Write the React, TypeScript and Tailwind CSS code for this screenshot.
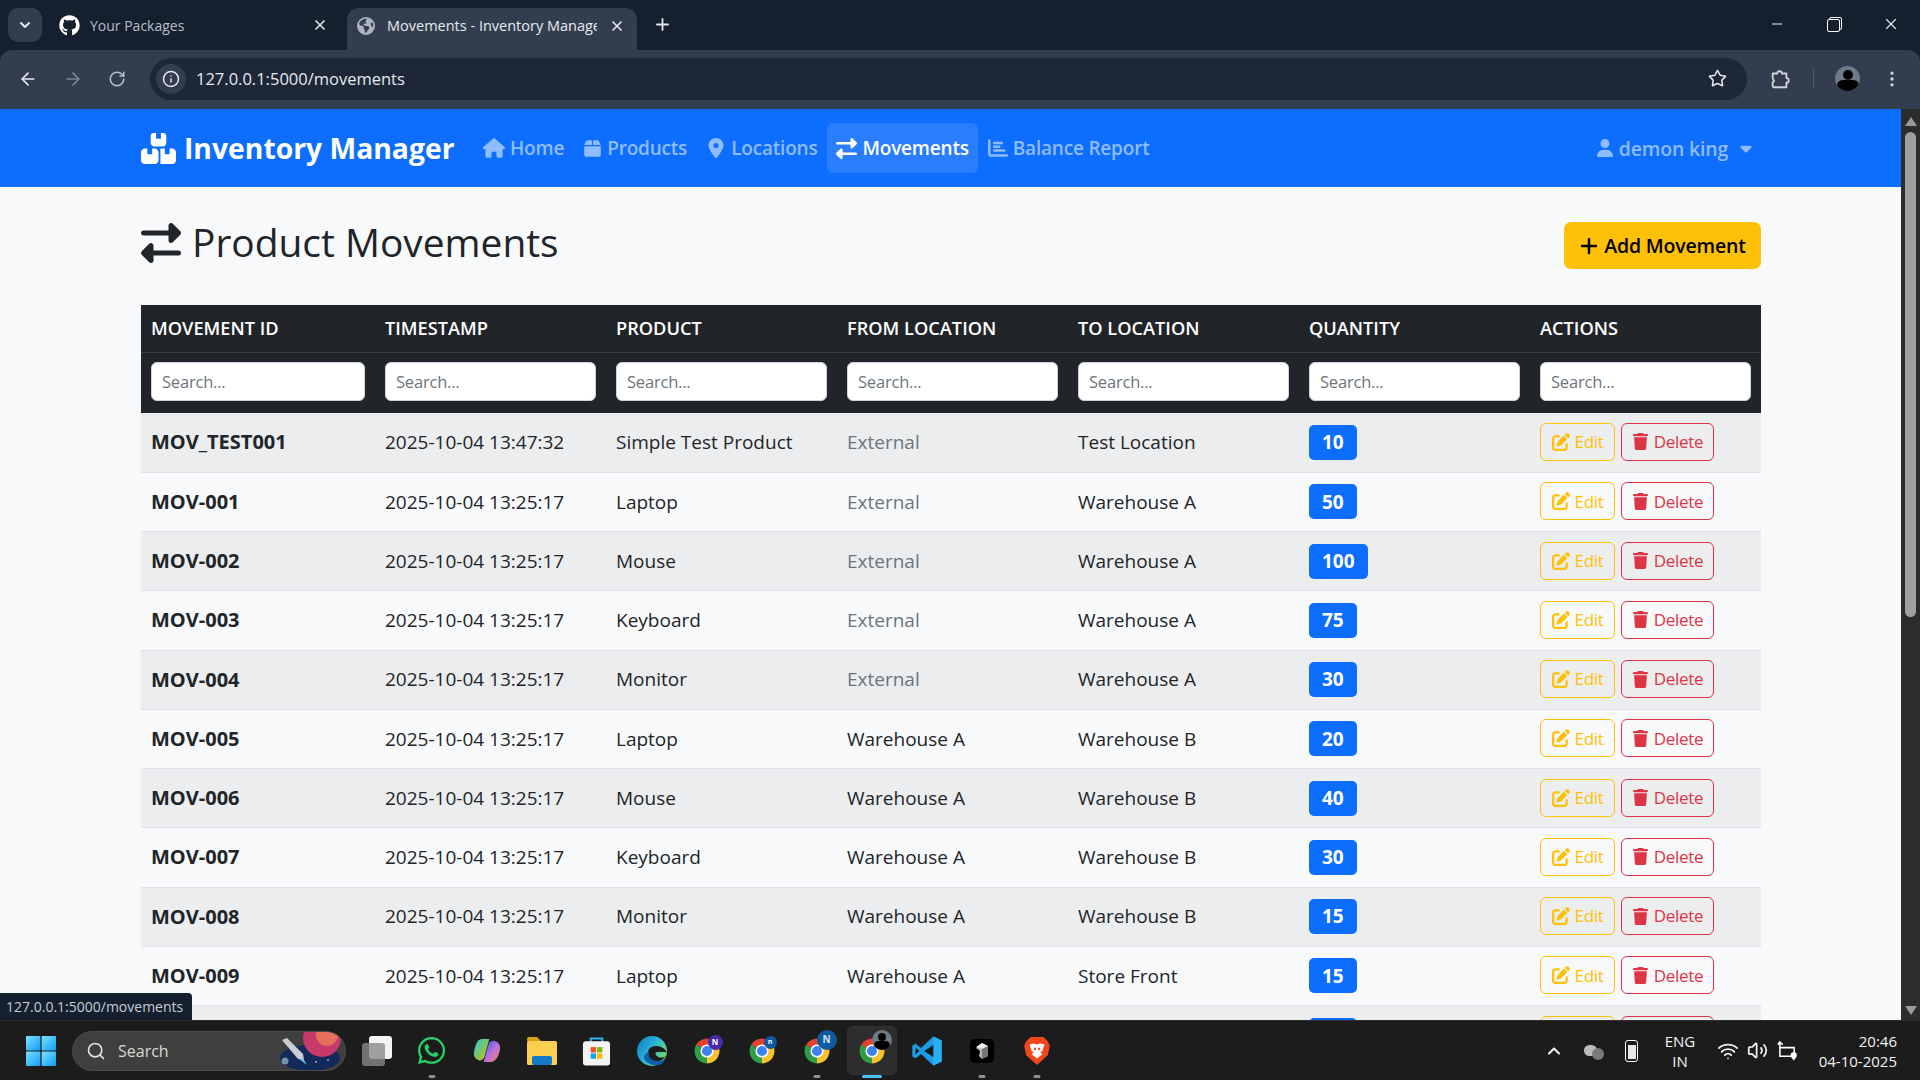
import { ArrowLeft, ArrowRight, ChevronDown, ChevronUp, EllipsisVertical, Info, Minus, Plus, RotateCw, Search, Star, Volume2, Wifi, X } from "lucide-react";
import { FaBox, FaBoxesStacked, FaCaretDown, FaChartBar, FaEarthAmericas, FaGithub, FaHouse, FaLocationDot, FaPenToSquare, FaPlus, FaRightLeft, FaTrash, FaUser, FaWhatsapp } from "react-icons/fa6";

const movements = [
    ["MOV_TEST001", "2025-10-04 13:47:32", "Simple Test Product", "External", "Test Location", "10"],
    ["MOV-001", "2025-10-04 13:25:17", "Laptop", "External", "Warehouse A", "50"],
    ["MOV-002", "2025-10-04 13:25:17", "Mouse", "External", "Warehouse A", "100"],
    ["MOV-003", "2025-10-04 13:25:17", "Keyboard", "External", "Warehouse A", "75"],
    ["MOV-004", "2025-10-04 13:25:17", "Monitor", "External", "Warehouse A", "30"],
    ["MOV-005", "2025-10-04 13:25:17", "Laptop", "Warehouse A", "Warehouse B", "20"],
    ["MOV-006", "2025-10-04 13:25:17", "Mouse", "Warehouse A", "Warehouse B", "40"],
    ["MOV-007", "2025-10-04 13:25:17", "Keyboard", "Warehouse A", "Warehouse B", "30"],
    ["MOV-008", "2025-10-04 13:25:17", "Monitor", "Warehouse A", "Warehouse B", "15"],
    ["MOV-009", "2025-10-04 13:25:17", "Laptop", "Warehouse A", "Store Front", "15"],
    ["MOV-010", "2025-10-04 13:25:17", "Mouse", "Warehouse A", "Store Front", "25"],
];

const headers = ["MOVEMENT ID", "TIMESTAMP", "PRODUCT", "FROM LOCATION", "TO LOCATION", "QUANTITY", "ACTIONS"];

function ChromeIcon({ badge }: { badge?: React.ReactNode }) {
    return (
        <div className="relative w-[30px] h-[30px]">
            <svg viewBox="0 0 48 48" className="w-[30px] h-[30px]">
                <path d="M24 24L6.68 14A20 20 0 0 1 41.32 14Z" fill="#e2412f" />
                <path d="M24 24L41.32 14A20 20 0 0 1 24 44Z" fill="#fbc02d" />
                <path d="M24 24L24 44A20 20 0 0 1 6.68 14Z" fill="#2e9e48" />
                <circle cx="24" cy="24" r="10.5" fill="#fff" />
                <circle cx="24" cy="24" r="8" fill="#3b82f0" />
            </svg>
            {badge}
        </div>
    );
}

function Dot({ active }: { active?: boolean }) {
    if (active) return <div className="absolute bottom-[3px] left-1/2 -translate-x-1/2 w-[20px] h-[3px] rounded-full bg-[#4cc2ff]" />;
    return <div className="absolute bottom-[3px] left-1/2 -translate-x-1/2 w-[7px] h-[3px] rounded-full bg-[#8f8f8f]" />;
}

function TaskIcon({ children, dot, active }: { children: React.ReactNode; dot?: boolean; active?: boolean }) {
    return (
        <div className="relative w-[55px] h-[60px] flex items-center justify-center">
            {active && <div className="absolute top-[5px] left-[3px] w-[50px] h-[49px] rounded-md bg-[#2d2d2d] border border-[#333]" />}
            <div className="relative">{children}</div>
            {dot && <Dot active={active} />}
        </div>
    );
}

function Taskbar() {
    return (
        <div className="h-[60px] shrink-0 flex items-center bg-[#1c1c1c] border-t border-[#2f2f2f] pl-[14px] pr-[23px] text-white">
            <div className="w-[54px] flex justify-center">
                <svg viewBox="0 0 30 30" className="w-[30px] h-[30px]">
                    <defs>
                        <linearGradient id="win" x1="0" y1="0" x2="1" y2="1">
                            <stop offset="0" stopColor="#7be3ff" />
                            <stop offset="1" stopColor="#0f9bfa" />
                        </linearGradient>
                    </defs>
                    <rect x="0" y="0" width="14.4" height="14.4" rx="1" fill="url(#win)" />
                    <rect x="15.6" y="0" width="14.4" height="14.4" rx="1" fill="url(#win)" />
                    <rect x="0" y="15.6" width="14.4" height="14.4" rx="1" fill="url(#win)" />
                    <rect x="15.6" y="15.6" width="14.4" height="14.4" rx="1" fill="url(#win)" />
                </svg>
            </div>
            <div className="relative ml-[4px] mr-[3px] w-[274px] h-[40px] rounded-full bg-[#3f3f3f] border border-[#4c4c4c] flex items-center pl-[13px] overflow-hidden">
                <Search size={20} strokeWidth={2} className="text-[#e0e0e0]" />
                <span className="ml-[12px] text-[16px] text-[#d8d8d8]">Search</span>
                <svg viewBox="0 0 62 38" className="absolute right-[3px] top-0 w-[62px] h-[38px]">
                    <ellipse cx="30" cy="26" rx="30" ry="13" fill="#12295a" />
                    <circle cx="42" cy="6" r="19" fill="#c7386b" />
                    <circle cx="47" cy="3" r="11" fill="#e5705a" />
                    <path d="M2 8L7 6L23 22L24 28L18 27Z" fill="#c9ced6" />
                    <path d="M19 27L27 33L24 28Z" fill="#5fc7f5" />
                    <circle cx="5" cy="29" r="3.5" fill="#7891ad" />
                    <circle cx="36" cy="30" r="0.8" fill="#fff" />
                    <circle cx="48" cy="28" r="0.8" fill="#fff" />
                </svg>
            </div>
            <TaskIcon>
                <div className="relative w-[30px] h-[30px]">
                    <div className="absolute right-0 top-0 w-[23px] h-[23px] rounded-[3px] bg-[#f3f3f3]" />
                    <div className="absolute left-0 bottom-0 w-[23px] h-[23px] rounded-[3px] bg-[#8a8a8a]/80" />
                </div>
            </TaskIcon>
            <TaskIcon dot>
                <FaWhatsapp size={31} className="text-[#25d366]" />
            </TaskIcon>
            <TaskIcon>
                <svg viewBox="0 0 30 30" className="w-[29px] h-[29px]">
                    <defs>
                        <linearGradient id="cop1" x1="0" y1="0" x2="1" y2="1">
                            <stop offset="0" stopColor="#2fc7e8" />
                            <stop offset="0.6" stopColor="#8ac44c" />
                            <stop offset="1" stopColor="#f4c22f" />
                        </linearGradient>
                        <linearGradient id="cop2" x1="0" y1="0" x2="1" y2="1">
                            <stop offset="0" stopColor="#2b62e0" />
                            <stop offset="0.5" stopColor="#b66ee0" />
                            <stop offset="1" stopColor="#f68a5a" />
                        </linearGradient>
                    </defs>
                    <path d="M10 3h8l-5 18c-1 3-3 5-6 4-3-1-5-3-5-6 0-6 3-16 8-16Z" fill="url(#cop1)" />
                    <path d="M20 27h-8l5-18c1-3 3-4 6-4 3 1 6 3 6 7 0 6-4 15-9 15Z" fill="url(#cop2)" />
                </svg>
            </TaskIcon>
            <TaskIcon>
                <svg viewBox="0 0 30 28" className="w-[30px] h-[28px]">
                    <path d="M0 2a2 2 0 0 1 2-2h8l4 4H0Z" fill="#d9a014" />
                    <rect x="0" y="4" width="30" height="24" rx="1.5" fill="#fcd04f" />
                    <rect x="5" y="19" width="20" height="9" rx="2" fill="#1478c8" />
                </svg>
            </TaskIcon>
            <TaskIcon>
                <svg viewBox="0 0 30 30" className="w-[29px] h-[30px]">
                    <path d="M9 6V2h12v4" fill="none" stroke="#29b6f6" strokeWidth="2" />
                    <rect x="1" y="5" width="28" height="25" rx="3" fill="#f3f3f3" />
                    <rect x="9" y="11" width="5.5" height="5.5" fill="#f25022" />
                    <rect x="15.5" y="11" width="5.5" height="5.5" fill="#7fba00" />
                    <rect x="9" y="17.5" width="5.5" height="5.5" fill="#00a4ef" />
                    <rect x="15.5" y="17.5" width="5.5" height="5.5" fill="#ffb900" />
                </svg>
            </TaskIcon>
            <TaskIcon>
                <svg viewBox="0 0 30 30" className="w-[30px] h-[30px]">
                    <defs>
                        <linearGradient id="edge" x1="0" y1="0" x2="1" y2="0.6">
                            <stop offset="0" stopColor="#0d79c9" />
                            <stop offset="0.55" stopColor="#2bb5d8" />
                            <stop offset="1" stopColor="#6fdc6a" />
                        </linearGradient>
                    </defs>
                    <circle cx="15" cy="15" r="15" fill="url(#edge)" />
                    <path d="M30 17c-2-5-6-7-11-7-5 0-8 3-8 7 0 5 5 9 10 8 3 0 6-2 8-5-3 2-7 2-9 0-2-1-2-4 0-4h8c1 0 2 1 2 1Z" fill="#1c1c1c" />
                    <path d="M7 22c2 5 8 8 14 7 3 0 6-3 7-6-3 2-8 3-12 1-3-1-5-4-4-8-3 0-5 3-5 6Z" fill="#0f5ea8" />
                </svg>
            </TaskIcon>
            <TaskIcon>
                <ChromeIcon badge={<div className="absolute -top-[1px] -right-[1px] w-[15px] h-[15px] rounded-full bg-[#4b2aa8] flex items-center justify-center text-[8px] font-bold text-white">N</div>} />
            </TaskIcon>
            <TaskIcon>
                <ChromeIcon badge={<div className="absolute top-0 right-0 w-[13px] h-[13px] rounded-full bg-[#0f5a9e] flex items-center justify-center text-[7px] font-bold text-white">n</div>} />
            </TaskIcon>
            <TaskIcon dot>
                <ChromeIcon badge={<div className="absolute -top-[6px] -right-[5px] w-[20px] h-[20px] rounded-full bg-[#0f5a9e] flex items-center justify-center text-[10px] font-bold text-[#cfe2f5]">N</div>} />
            </TaskIcon>
            <TaskIcon dot active>
                <ChromeIcon
                    badge={
                        <div className="absolute -top-[6px] -right-[5px] w-[20px] h-[20px] rounded-full bg-[#6f7a88] overflow-hidden flex flex-col items-center">
                            <div className="mt-[3px] w-[8px] h-[9px] rounded-full bg-black" />
                            <div className="w-[16px] h-[10px] rounded-full bg-black" />
                        </div>
                    }
                />
            </TaskIcon>
            <TaskIcon>
                <svg viewBox="0 0 100 100" className="w-[30px] h-[30px]">
                    <path d="M71 2L99 15V85L71 98L30 60L12 74L1 68V32L12 26L30 40Z" fill="#1a9be6" />
                    <path d="M71 2L99 15V85L71 98Z" fill="#29b0f2" />
                    <path d="M71 30L41 50L71 70Z" fill="#1c1c1c" />
                    <path d="M12 38L24 50L12 62Z" fill="#1c1c1c" />
                </svg>
            </TaskIcon>
            <TaskIcon dot>
                <svg viewBox="0 0 24 24" className="w-[24px] h-[24px]">
                    <rect width="24" height="24" rx="5" fill="#000" />
                    <path d="M12 4L18 7L17 11L18 17L12 20L9 17L10 12L6 9Z" fill="#b5b5b5" />
                    <path d="M12 4L18 7L12 10L6 8Z" fill="#eee" />
                    <path d="M12 10L18 7L18 17L12 20Z" fill="#777" />
                </svg>
            </TaskIcon>
            <TaskIcon dot>
                <svg viewBox="0 0 24 28" className="w-[26px] h-[30px]">
                    <path d="M6 1H18L22 5L24 9L22 18L12 27L2 18L0 9L2 5Z" fill="#f1471d" />
                    <path d="M5 8L9 7L12 8L15 7L19 8L17 14L15 15L17 17L12 21L7 17L9 15L7 14Z" fill="#fff" />
                    <path d="M9 11H11V13H9ZM13 11H15V13H13Z" fill="#f1471d" />
                </svg>
            </TaskIcon>

            <div className="ml-auto flex items-center text-[#f2f2f2]">
                <ChevronUp size={20} strokeWidth={2.5} />
                <div className="relative ml-[20px] w-[20px] h-[18px]">
                    <div className="absolute left-0 top-[3px] w-[13px] h-[11px] rounded-full bg-[#bdbdbd]" />
                    <div className="absolute right-0 bottom-0 w-[12px] h-[12px] rounded-full bg-[#7a7a7a]" />
                </div>
                <div className="ml-[21px] w-[13px] h-[22px] rounded-[3px] border-[1.5px] border-white p-[1.5px] flex items-end">
                    <div className="w-full h-[14px] bg-white/90" />
                </div>
                <div className="ml-[24px] w-[36px] text-center text-[15px] leading-[20px]">
                    <div>ENG</div>
                    <div>IN</div>
                </div>
                <Wifi size={22} className="ml-[19px]" />
                <Volume2 size={21} className="ml-[8px]" />
                <svg viewBox="0 0 22 22" className="ml-[9px] w-[21px] h-[21px]" fill="none" stroke="white" strokeWidth="1.6">
                    <path d="M3 8h15v9H3Z" />
                    <path d="M3 3v5M6 5L3 2 1 5" />
                    <path d="M15 16c0-3 5-3 5 0 0 2-2 3-2.500 4-.5-1-2.500-2-2.500-4Z" fill="white" />
                </svg>
                <div className="ml-[17px] text-right text-[15px] leading-[20px] w-[82px] whitespace-nowrap">
                    <div>20:46</div>
                    <div>04-10-2025</div>
                </div>
            </div>
        </div>
    );
}

function BrowserChrome() {
    return (
        <div className="shrink-0 bg-[#15202e] text-[#e6e9ed]">
            <div className="h-[50px] flex items-start pl-[8px]">
                <div className="mt-[8px] w-[34px] h-[34px] rounded-[10px] bg-[#323e4f] flex items-center justify-center">
                    <ChevronDown size={16} strokeWidth={3} />
                </div>
                <div className="w-[299px] h-[42px] flex items-center pl-[17px] pr-[13px] mt-[4px] text-[#b6bdc7]">
                    <FaGithub size={21} className="text-white" />
                    <span className="ml-[10px] text-[14px]">Your Packages</span>
                    <X size={16} strokeWidth={2.5} className="ml-auto text-[#e6e9ed]" />
                </div>
                <div className="ml-[6px] mt-[8px] w-[290px] h-[42px] rounded-t-[12px] bg-[#323e4f] flex items-center pl-[10px] pr-[12px] pb-[6px]">
                    <FaEarthAmericas size={18} className="text-[#aeb5bf]" />
                    <span className="ml-[12px] w-[210px] overflow-hidden whitespace-nowrap text-[14.5px]">Movements - Inventory Manager</span>
                    <X size={16} strokeWidth={2.5} className="ml-auto" />
                </div>
                <Plus size={19} strokeWidth={2.25} className="ml-[16px] mt-[15px]" />
                <div className="ml-auto flex items-center h-[48px] pr-[20px] gap-[42px]">
                    <Minus size={16} strokeWidth={1.5} />
                    <div className="relative w-[13px] h-[13px] mt-[2px]">
                        <div className="absolute inset-0 -top-[2px] left-[2px] -right-[2px] bottom-[2px] border border-white rounded-[2px]" />
                        <div className="absolute inset-0 bg-[#15202e] border border-white rounded-[2px]" />
                    </div>
                    <X size={18} strokeWidth={1.5} />
                </div>
            </div>
            <div className="h-[59px] pb-[2px] bg-[#323e4f] rounded-t-[12px] flex items-center pl-[18px] pr-[9px]">
                <ArrowLeft size={20} />
                <ArrowRight size={20} className="ml-[25px] text-[#7b8490]" />
                <RotateCw size={18} className="ml-[25px] text-[#b9c0ca]" />
                <div className="ml-[24px] w-[1597px] h-[42px] rounded-full bg-[#1c2838] flex items-center pl-[6px] pr-[20px]">
                    <div className="w-[30px] h-[30px] rounded-full bg-[#323e4f] flex items-center justify-center">
                        <Info size={18} />
                    </div>
                    <span className="ml-[10px] pt-[2px] text-[16.5px]">127.0.0.1:5000/movements</span>
                    <Star size={19} className="ml-auto" />
                </div>
                <svg viewBox="0 0 24 24" className="ml-[22px] w-[22px] h-[22px] text-[#cfd4da]" fill="none" stroke="currentColor" strokeWidth="2" strokeLinejoin="round">
                    <path d="M4 6h5a2.500 2.500 0 0 1 5 0h5v5a2.500 2.500 0 0 1 0 5v5H5l-1-1v-4l1.500-2L4 11Z" />
                </svg>
                <div className="ml-[22px] w-[1px] h-[21px] bg-[#4b5666]" />
                <div className="ml-[21px] w-[25px] h-[25px] rounded-full bg-[#6f7a88] overflow-hidden flex flex-col items-center">
                    <div className="mt-[4px] w-[10px] h-[11px] rounded-full bg-black" />
                    <div className="w-[22px] h-[12px] rounded-full bg-black" />
                </div>
                <EllipsisVertical size={20} className="ml-[22px] text-[#cfd4da]" />
            </div>
        </div>
    );
}

function Navbar() {
    const links = [
        { label: "Home", icon: <FaHouse size={22} />, active: false },
        { label: "Products", icon: <FaBox size={19} />, active: false },
        { label: "Locations", icon: <FaLocationDot size={20} />, active: false },
        { label: "Movements", icon: <FaRightLeft size={21} />, active: true },
        { label: "Balance Report", icon: <FaChartBar size={20} />, active: false },
    ];
    return (
        <nav className="h-[78px] shrink-0 bg-[#0d6efd] flex items-center pl-[141px] pr-[146px]">
            <div className="flex items-center text-white">
                <FaBoxesStacked size={35} />
                <span className="ml-[8px] text-[28.300px] font-bold">Inventory Manager</span>
            </div>
            <div className="ml-[19px] flex items-center">
                {links.map((l) => (
                    <div
                        key={l.label}
                        className={l.active ? "h-[50px] px-[9.5px] rounded-[6px] bg-[#2a7efd] text-white flex items-center gap-[5px] font-semibold text-[19px] tracking-[-0.2px]" : "h-[50px] px-[9.5px] rounded-[6px] text-[#8fbcfe] flex items-center gap-[5px] font-semibold text-[19px] tracking-[-0.2px]"}
                    >
                        {l.icon}
                        <span className="pt-[1px]">{l.label}</span>
                    </div>
                ))}
            </div>
            <div className="ml-auto flex items-center text-[#8fbcfe] font-semibold text-[19.500px] tracking-[-0.2px]">
                <FaUser size={18} />
                <span className="ml-[5px] pt-[1px]">demon king</span>
                <FaCaretDown size={18} className="ml-[9px]" />
            </div>
        </nav>
    );
}

function MovementsTable() {
    return (
        <table className="w-full table-fixed border-collapse text-[19px] text-[#212529]">
            <colgroup>
                <col className="w-[234px]" />
                <col className="w-[231px]" />
                <col className="w-[231px]" />
                <col className="w-[231px]" />
                <col className="w-[231px]" />
                <col className="w-[231px]" />
                <col className="w-[231px]" />
            </colgroup>
            <thead className="bg-[#212529] text-white">
                <tr className="h-[47px] border-b border-[#373b3e]">
                    {headers.map((h) => (
                        <th key={h} className="px-[10px] text-left text-[18.200px] font-semibold">
                            {h}
                        </th>
                    ))}
                </tr>
                <tr className="h-[61px]">
                    {headers.map((h) => (
                        <th key={h} className="px-[10px] pb-[2px] font-normal">
                            <input
                                placeholder="Search..."
                                className="w-full h-[39px] px-[10px] rounded-[6px] bg-white border border-[#ced4da] text-[16.500px] tracking-[-0.2px] placeholder:text-[#6c757d] outline-none"
                            />
                        </th>
                    ))}
                </tr>
            </thead>
            <tbody>
                {movements.map((m, i) => (
                    <tr key={m[0]} className={i % 2 === 0 ? "h-[59.25px] bg-[#ecedee] border-b border-[#dee2e6]" : "h-[59.25px] bg-[#f8f9fa] border-b border-[#dee2e6]"}>
                        <td className="px-[10px] text-[20px] font-bold whitespace-nowrap">{m[0]}</td>
                        <td className="px-[10px] whitespace-nowrap">{m[1]}</td>
                        <td className="px-[10px] whitespace-nowrap">{m[2]}</td>
                        <td className={m[3] === "External" ? "px-[10px] text-[#6c757d]" : "px-[10px]"}>{m[3]}</td>
                        <td className="px-[10px]">{m[4]}</td>
                        <td className="px-[10px]">
                            <span className="inline-flex items-center justify-center h-[35px] px-[13px] rounded-[5px] bg-[#0d6efd] text-white font-bold text-[19px]">{m[5]}</span>
                        </td>
                        <td className="px-[10px]">
                            <div className="flex gap-[6px] -mt-[1px]">
                                <button className="h-[38px] w-[75px] flex items-center justify-center gap-[5px] rounded-[6px] border border-[#ffc107] text-[#ffc107] text-[17px] font-medium tracking-[-0.3px]">
                                    <FaPenToSquare size={18} />
                                    Edit
                                </button>
                                <button className="h-[38px] w-[93px] flex items-center justify-center gap-[5px] rounded-[6px] border border-[#dc3545] text-[#dc3545] text-[17px] font-medium tracking-[-0.3px]">
                                    <FaTrash size={17} />
                                    Delete
                                </button>
                            </div>
                        </td>
                    </tr>
                ))}
            </tbody>
        </table>
    );
}

function Scrollbar() {
    return (
        <div className="w-[19px] shrink-0 bg-[#2c2c2c] flex flex-col items-center pt-[8px] pb-[2px]">
            <div className="w-0 h-0 border-x-[6px] border-x-transparent border-b-[9px] border-b-[#9a9a9a]" />
            <div className="mt-[6px] w-[11px] h-[485px] rounded-full bg-[#9f9f9f]" />
            <div className="mt-auto mb-[3px] w-0 h-0 border-x-[6px] border-x-transparent border-t-[9px] border-t-[#9a9a9a]" />
        </div>
    );
}

export default function App() {
    return (
        <div className="w-[1920px] h-[1080px] flex flex-col overflow-hidden bg-[#f8f9fa] font-['Open_Sans',sans-serif]">
            <BrowserChrome />
            <div className="relative flex flex-1 min-h-0">
                <div className="flex-1 min-w-0 overflow-hidden">
                    <Navbar />
                    <main className="pl-[141px] pr-[140px] pt-[35px]">
                        <div className="flex items-center justify-between h-[47px]">
                            <h1 className="flex items-center -mt-[6px] text-[#212529] text-[38.900px] font-medium">
                                <FaRightLeft size={40} />
                                <span className="ml-[11px]">Product Movements</span>
                            </h1>
                            <button className="h-[47px] w-[197px] flex items-center justify-center gap-[5px] rounded-[7px] bg-[#ffc107] text-black text-[19.500px] font-semibold tracking-[-0.2px]">
                                <FaPlus size={20} />
                                Add Movement
                            </button>
                        </div>
                        <div className="mt-[36px]">
                            <MovementsTable />
                        </div>
                    </main>
                </div>
                <Scrollbar />
                <div className="absolute left-0 bottom-0 h-[27px] w-[192px] bg-[#15202e] rounded-tr-[4px] flex items-center pl-[6px] text-[14px] text-[#c5ccd6] whitespace-nowrap">
                    127.0.0.1:5000/movements
                </div>
            </div>
            <Taskbar />
        </div>
    );
}
